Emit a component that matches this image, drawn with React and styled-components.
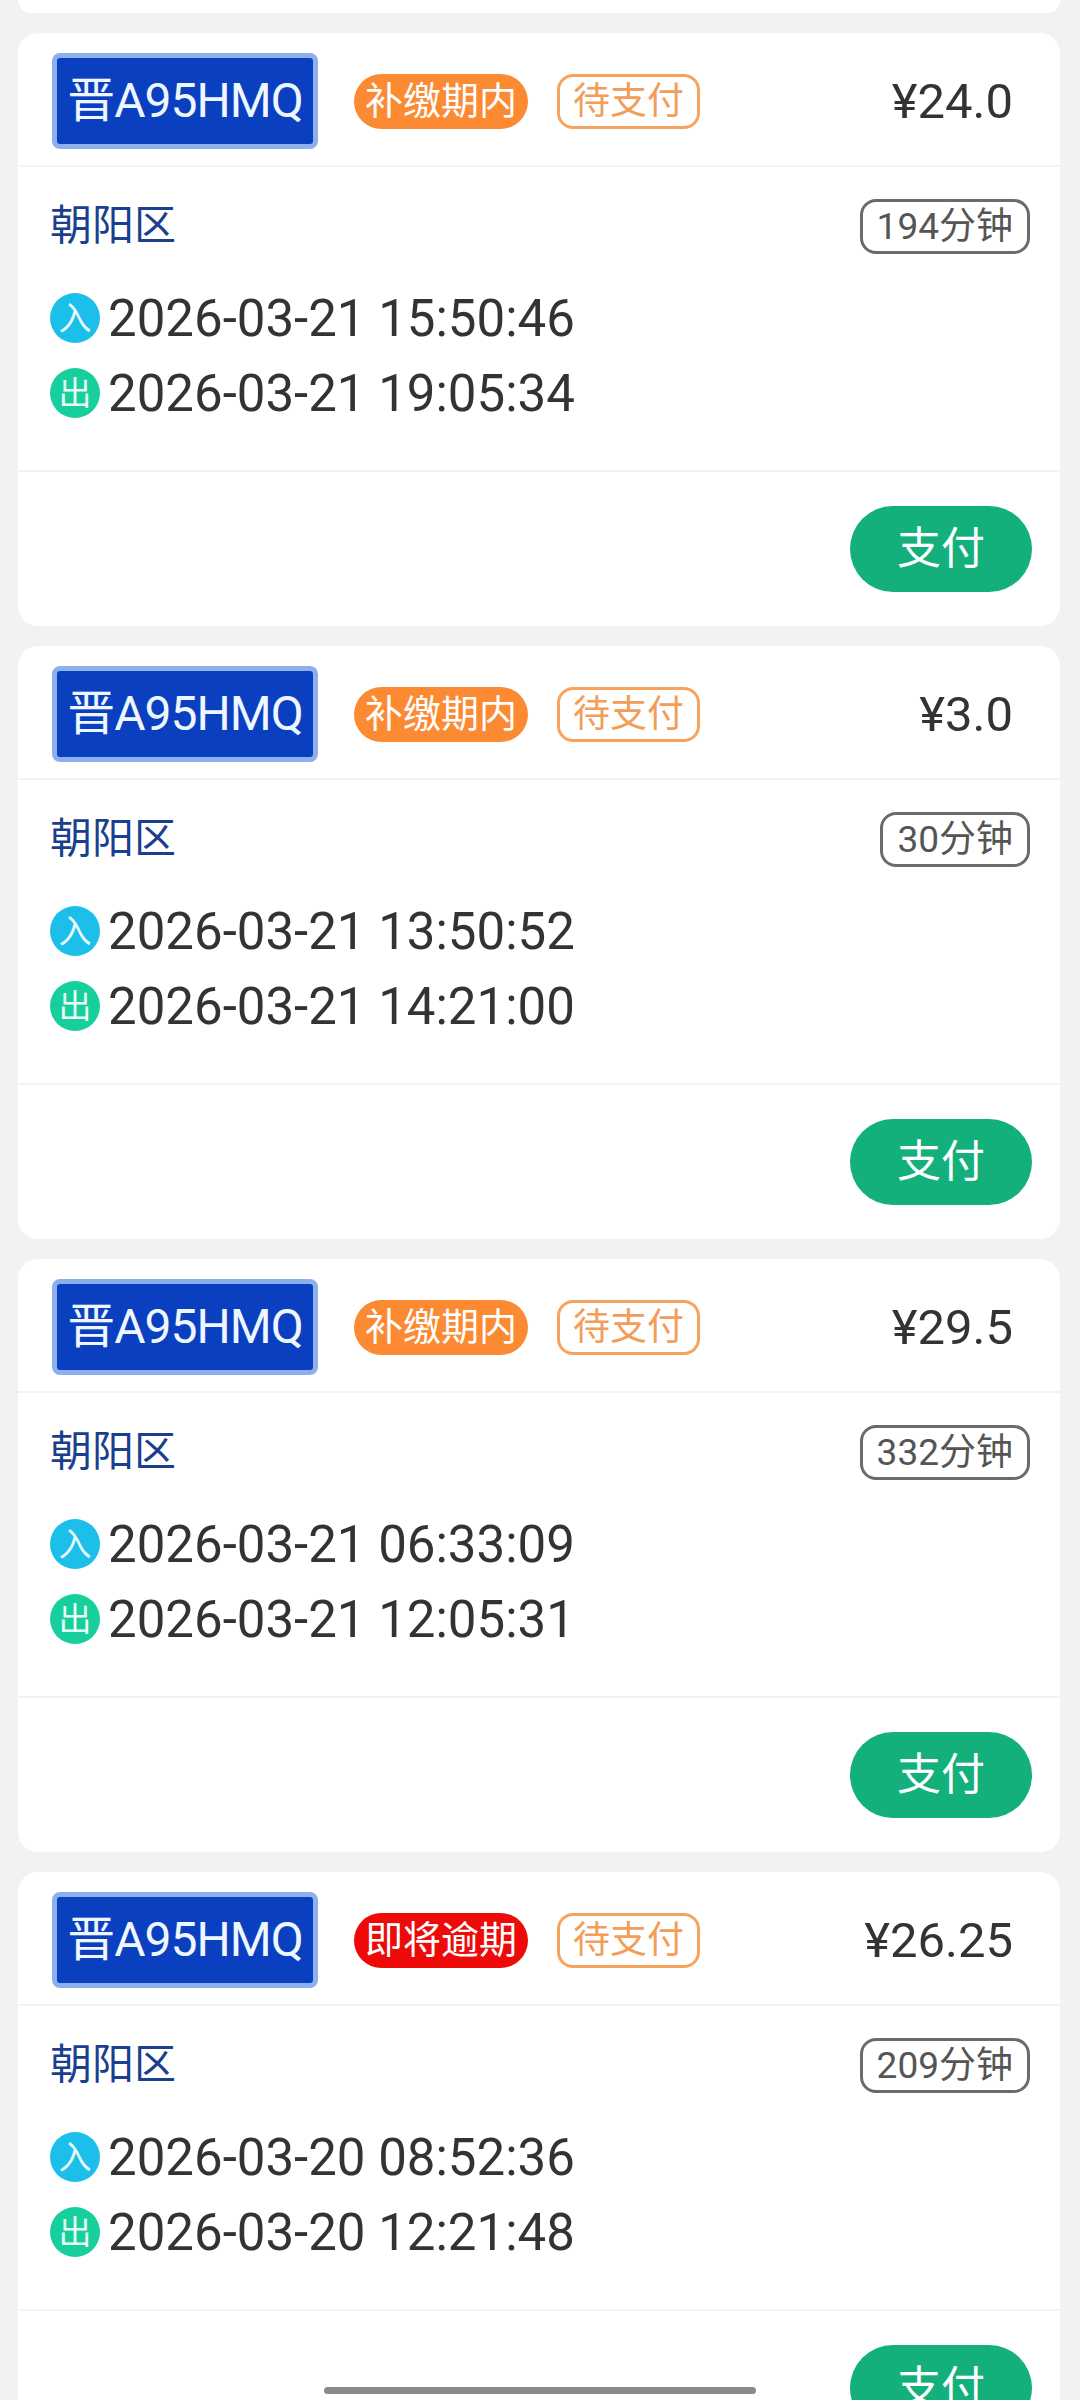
import React from "react";
import styled, { createGlobalStyle } from "styled-components";

const GlobalStyle = createGlobalStyle`
  html, body { margin: 0; padding: 0; background: #f2f2f2; }
  body { font-family: Roboto, "Noto Sans CJK SC", sans-serif; }
  * { box-sizing: border-box; }
`;

const Page = styled.div`
  height: 2400px;
  overflow: hidden;
  background: #f2f2f2;
  padding: 0 20px 0 18px;
  display: flex;
  flex-direction: column;
  gap: 20px;
`;

const PrevTail = styled.div`
  height: 13px;
  flex-shrink: 0;
  background: #fff;
  border-radius: 0 0 20px 20px;
`;

const Card = styled.section`
  flex-shrink: 0;
  height: 593px;
  background: #fff;
  border-radius: 20px;
  overflow: hidden;
  display: flex;
  flex-direction: column;
`;

const Header = styled.div`
  height: 134px;
  display: flex;
  align-items: center;
  padding: 4px 47px 0 34px;
  border-bottom: 2px solid #f3f3f3;
`;

const Plate = styled.div`
  width: 266px;
  height: 96px;
  border: 5px solid #8db0ec;
  border-radius: 8px;
  background: #0a40bf;
  color: #eef6ff;
  font-size: 48px;
  line-height: 1;
  letter-spacing: -1px;
  display: flex;
  align-items: center;
  justify-content: center;
  margin-right: 36px;
`;

const StatusPill = styled.span`
  height: 55px;
  padding: 0 11px;
  border-radius: 28px;
  background: ${(p) => p.$bg};
  color: #fff;
  font-size: 38px;
  line-height: 1;
  display: flex;
  align-items: center;
  margin-right: 29px;
`;

const PayTag = styled.span`
  height: 55px;
  padding: 0 13px;
  border: 3px solid #f6a35e;
  border-radius: 16px;
  color: #f29d58;
  font-size: 37px;
  line-height: 1;
  display: flex;
  align-items: center;
`;

const Price = styled.span`
  margin-left: auto;
  font-size: 49px;
  line-height: 1;
  color: #333;
`;

const Body = styled.div`
  height: 305px;
  padding: 31px 30px 0 32px;
  border-bottom: 2px solid #f3f3f3;
`;

const LocationRow = styled.div`
  height: 56px;
  display: flex;
  align-items: center;
  justify-content: space-between;
`;

const Location = styled.span`
  font-size: 42px;
  line-height: 1;
  color: #1b3f8f;
`;

const Duration = styled.span`
  height: 55px;
  padding: 0 14px;
  border: 3px solid #6b6b6b;
  border-radius: 16px;
  color: #555;
  font-size: 37px;
  line-height: 1;
  display: flex;
  align-items: center;
`;

const Times = styled.div`
  margin-top: 34px;
  display: flex;
  flex-direction: column;
  gap: 15px;
`;

const TimeRow = styled.div`
  height: 60px;
  display: flex;
  align-items: center;
  gap: 8px;
`;

const Dot = styled.span`
  width: 50px;
  height: 50px;
  border-radius: 50%;
  background: ${(p) => p.$bg};
  color: rgba(255, 255, 255, 0.92);
  font-size: 33px;
  line-height: 1;
  display: flex;
  align-items: center;
  justify-content: center;
  flex-shrink: 0;
`;

const TimeText = styled.span`
  font-size: 51px;
  line-height: 1;
  color: #333;
`;

const Footer = styled.div`
  flex: 1;
  display: flex;
  align-items: center;
  justify-content: flex-end;
  padding-right: 28px;
`;

const PayButton = styled.button`
  width: 182px;
  height: 86px;
  border: none;
  border-radius: 43px;
  background: #14b07b;
  color: #fff;
  font-family: inherit;
  font-size: 44px;
  line-height: 1;
  padding: 0;
`;

const HomeIndicator = styled.div`
  position: fixed;
  left: 324px;
  bottom: 6px;
  width: 432px;
  height: 7px;
  border-radius: 4px;
  background: #8a8a8a;
`;

const records = [
  {
    status: "补缴期内",
    statusBg: "#fb8a33",
    price: "¥24.0",
    duration: "194分钟",
    enter: "2026-03-21 15:50:46",
    exit: "2026-03-21 19:05:34",
  },
  {
    status: "补缴期内",
    statusBg: "#fb8a33",
    price: "¥3.0",
    duration: "30分钟",
    enter: "2026-03-21 13:50:52",
    exit: "2026-03-21 14:21:00",
  },
  {
    status: "补缴期内",
    statusBg: "#fb8a33",
    price: "¥29.5",
    duration: "332分钟",
    enter: "2026-03-21 06:33:09",
    exit: "2026-03-21 12:05:31",
  },
  {
    status: "即将逾期",
    statusBg: "#ef0a0a",
    price: "¥26.25",
    duration: "209分钟",
    enter: "2026-03-20 08:52:36",
    exit: "2026-03-20 12:21:48",
  },
];

function RecordCard({ r }) {
  return (
    <Card>
      <Header>
        <Plate>晋A95HMQ</Plate>
        <StatusPill $bg={r.statusBg}>{r.status}</StatusPill>
        <PayTag>待支付</PayTag>
        <Price>{r.price}</Price>
      </Header>
      <Body>
        <LocationRow>
          <Location>朝阳区</Location>
          <Duration>{r.duration}</Duration>
        </LocationRow>
        <Times>
          <TimeRow>
            <Dot $bg="#1bbfe9">入</Dot>
            <TimeText>{r.enter}</TimeText>
          </TimeRow>
          <TimeRow>
            <Dot $bg="#17cf9d">出</Dot>
            <TimeText>{r.exit}</TimeText>
          </TimeRow>
        </Times>
      </Body>
      <Footer>
        <PayButton>支付</PayButton>
      </Footer>
    </Card>
  );
}

export default function App() {
  return (
    <>
      <GlobalStyle />
      <Page>
        <PrevTail />
        {records.map((r, i) => (
          <RecordCard key={i} r={r} />
        ))}
      </Page>
      <HomeIndicator />
    </>
  );
}
